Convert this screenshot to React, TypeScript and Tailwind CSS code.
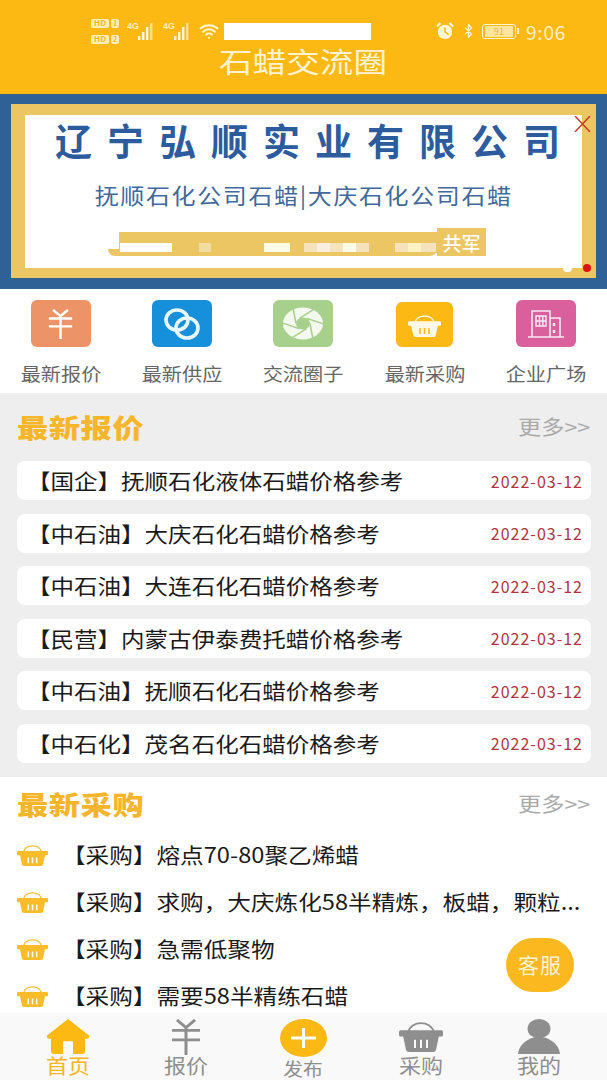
import React from 'react';
import { Bluetooth, Wifi } from 'lucide-react';

const quotes = [
  { title: '【国企】抚顺石化液体石蜡价格参考', date: '2022-03-12' },
  { title: '【中石油】大庆石化石蜡价格参考', date: '2022-03-12' },
  { title: '【中石油】大连石化石蜡价格参考', date: '2022-03-12' },
  { title: '【民营】内蒙古伊泰费托蜡价格参考', date: '2022-03-12' },
  { title: '【中石油】抚顺石化石蜡价格参考', date: '2022-03-12' },
  { title: '【中石化】茂名石化石蜡价格参考', date: '2022-03-12' },
];

const purchases = [
  '【采购】熔点70-80聚乙烯蜡',
  '【采购】求购，大庆炼化58半精炼，板蜡，颗粒...',
  '【采购】急需低聚物',
  '【采购】需要58半精练石蜡',
];

const Basket = ({ color, stripe, className }: { color: string; stripe: string; className: string }) => (
  <svg viewBox="0 0 44 32" preserveAspectRatio="none" className={className}>
    <path d="M9 13 C12 1 32 1 35 13" fill="none" stroke={color} strokeWidth="1.8" />
    <rect x="0" y="11" width="44" height="6" rx="1.5" fill={color} />
    <path d="M4 16 H40 L37 30 Q36.5 32 34 32 H10 Q7.5 32 7 30 Z" fill={color} />
    <path d="M16 20 V28 M22 20 V28 M28 20 V28" stroke={stripe} strokeWidth="2" />
  </svg>
);

const Yen = ({ color, className }: { color: string; className: string }) => (
  <svg viewBox="0 0 30 38" preserveAspectRatio="none" className={className}>
    <path d="M6 1 L15 9 L24 1 M1 12 H29 M1 22 H29 M15 9 V38" fill="none" stroke={color} strokeWidth="3" />
  </svg>
);

const Signal = () => (
  <svg viewBox="0 0 32 22" className="h-[22px] w-[32px]">
    <text x="0" y="9" fontSize="9" fontWeight="700" fill="#fdeeb8" fontFamily="Liberation Sans, sans-serif">4G</text>
    <rect x="11" y="16" width="2.4" height="4" fill="#fff6d8" />
    <rect x="15" y="12" width="2.4" height="8" fill="#fff6d8" />
    <rect x="19" y="7" width="2.4" height="13" fill="#fff6d8" />
    <rect x="23" y="3" width="2.4" height="17" fill="#fddf8a" />
  </svg>
);

const HdTag = ({ n }: { n: string }) => (
  <div className="flex items-center gap-[2px]">
    <span className="flex h-[9px] w-[18px] items-center justify-center rounded-[2px] bg-[#fdeeb8] text-[8px] font-bold leading-none text-[#fdb913]">HD</span>
    <span className="flex h-[9px] w-[8px] items-center justify-center rounded-[2px] bg-[#fdeeb8] text-[7px] font-bold leading-none text-[#fdb913]">{n}</span>
  </div>
);

const StatusBar = () => (
  <div className="flex h-[26px] items-center pl-[91px]">
    <div className="flex w-[36px] flex-col gap-[7px]">
      <HdTag n="1" />
      <HdTag n="2" />
    </div>
    <Signal />
    <div className="ml-[4px]">
      <Signal />
    </div>
    <Wifi className="ml-[3px] h-[20px] w-[22px] text-[#fff6d8]" strokeWidth={2.4} />
    <div className="ml-[4px] h-[17px] w-[147px] bg-white" />
    <svg viewBox="0 0 20 20" className="ml-[64px] h-[18px] w-[20px]">
      <circle cx="10" cy="11" r="8" fill="#fff6d8" />
      <path d="M10 6 V11 L14 14" fill="none" stroke="#fdb913" strokeWidth="1.8" />
      <path d="M1 5 L5 1 M19 5 L15 1" stroke="#fff6d8" strokeWidth="2.4" />
    </svg>
    <Bluetooth className="ml-[6px] h-[20px] w-[15px] text-[#fff6d8]" strokeWidth={2.2} />
    <div className="ml-[6px] flex items-center gap-[1px]">
      <div className="flex h-[15px] w-[34px] items-center justify-center rounded-[3px] border border-[#fff6d8]">
        <div className="flex h-[11px] w-[28px] items-center justify-center rounded-[1px] bg-[#fde59b] text-[9px] leading-none text-[#fdb913]">91</div>
      </div>
      <div className="h-[6px] w-[2px] bg-[#fff6d8]" />
    </div>
    <span className="ml-[7px] text-[19px] leading-none tracking-[0.8px] text-[#fdf0c4]">9:06</span>
  </div>
);

const Banner = () => (
  <div className="h-[195px] bg-[#2f6096] px-[11px] py-[10px]">
    <div className="h-[174px] bg-[#ecc663] pb-[10px] pl-[14px] pr-[14px] pt-[11px]">
      <div className="relative flex h-[153px] flex-col items-center bg-white">
        <div className="ml-[8px] mt-[3px] text-[37px] font-bold leading-[44px] tracking-[15px] text-[#2c5c9e] [margin-right:-15px]">辽宁弘顺实业有限公司</div>
        <div className="mt-[18px] scale-x-[1.09] text-[22px] leading-[28px] tracking-[1.5px] text-[#41699b]">抚顺石化公司石蜡|大庆石化公司石蜡</div>
        <div className="relative ml-[-13px] mt-[20px] h-[28px] w-[378px]">
          <div className="absolute left-[11px] right-[49px] top-[4px] h-[21px] bg-[#ecc663]" />
          <div className="absolute left-0 right-[49px] top-[21px] h-[7px] rounded-b-[8px] bg-[#ecc663]" />
          <div className="absolute right-0 top-0 flex h-[28px] w-[49px] items-center justify-center bg-[#ecc663] text-[19px] font-medium leading-none text-white">共军</div>
          <div className="absolute left-[12px] top-[15px] h-[9px] w-[52px] bg-white" />
          <div className="absolute left-[91px] top-[15px] h-[9px] w-[12px] bg-[#f3dca0]" />
          <div className="absolute left-[156px] top-[15px] h-[9px] w-[26px] bg-[#fffde8]" />
          <div className="absolute left-[196px] top-[15px] h-[9px] w-[65px] bg-[#f5e3bd]" />
          <div className="absolute left-[209px] top-[15px] h-[9px] w-[13px] bg-[#fbeee0]" />
          <div className="absolute left-[235px] top-[15px] h-[9px] w-[13px] bg-[#fffde8]" />
          <div className="absolute left-[287px] top-[15px] h-[9px] w-[41px] bg-[#f5e3bd]" />
          <div className="absolute left-[300px] top-[15px] h-[9px] w-[13px] bg-[#fff3c4]" />
        </div>
        <svg viewBox="0 0 17 16" className="absolute right-[-9px] top-[1px] h-[16px] w-[17px]">
          <path d="M1 0 L16 16 M16 0 L1 16" stroke="#c8352b" strokeWidth="1.4" />
        </svg>
      </div>
    </div>
    <div className="relative">
      <div className="absolute bottom-[6px] right-[5px] h-[8px] w-[8px] rounded-full bg-[#e0100c]" />
      <div className="absolute bottom-[6px] right-[24px] h-[8px] w-[9px] rounded-full bg-white" />
    </div>
  </div>
);

// 光圈图标的六条缝
const apertureSlits = [0, 60, 120, 180, 240, 300].map((deg) => {
  const a = (deg * Math.PI) / 180;
  const b = ((deg + 62) * Math.PI) / 180;
  return {
    x1: 30 + 7 * Math.cos(a),
    y1: 23.5 + 6 * Math.sin(a),
    x2: 30 + 21 * Math.cos(b),
    y2: 23.5 + 17 * Math.sin(b),
  };
});

const navItems = [
  {
    label: '最新报价',
    bg: 'bg-[#ec9468]',
    icon: <Yen color="#ffffff" className="h-[30px] w-[25px]" />,
    size: 'h-[47px] w-[60px]',
  },
  {
    label: '最新供应',
    bg: 'bg-[#1790db]',
    icon: (
      <svg viewBox="0 0 60 47" className="h-[47px] w-[60px]">
        <ellipse cx="25" cy="20" rx="11" ry="10" fill="none" stroke="#e8f6fd" strokeWidth="3.6" />
        <ellipse cx="35" cy="28" rx="11" ry="10" fill="none" stroke="#e8f6fd" strokeWidth="3.6" />
      </svg>
    ),
    size: 'h-[47px] w-[60px]',
  },
  {
    label: '交流圈子',
    bg: 'bg-[#a8d08d]',
    icon: (
      <svg viewBox="0 0 60 47" className="h-[47px] w-[60px]">
        <ellipse cx="30" cy="23.5" rx="20" ry="16" fill="#f3f9ee" />
        <ellipse cx="30" cy="23.5" rx="7" ry="6" fill="#a8d08d" />
        {apertureSlits.map((s) => (
          <line key={s.x1} x1={s.x1} y1={s.y1} x2={s.x2} y2={s.y2} stroke="#a8d08d" strokeWidth="1.5" />
        ))}
      </svg>
    ),
    size: 'h-[47px] w-[60px]',
  },
  {
    label: '最新采购',
    bg: 'bg-[#fdb913]',
    icon: <Basket color="#fff8e6" stripe="#fdb913" className="h-[24px] w-[33px]" />,
    size: 'h-[45px] w-[57px]',
  },
  {
    label: '企业广场',
    bg: 'bg-[#d95f9d]',
    icon: (
      <svg viewBox="0 0 36 28" className="h-[28px] w-[36px]" fill="none" stroke="#fbeaf3" strokeWidth="1.6">
        <path d="M0 27 H36 M4 27 V1 H22 V27 M22 8 H32 V27" />
        <path d="M8 6 H18 V16 H8 Z M8 11 H18 M11.5 6 V16 M14.8 6 V16" strokeWidth="1.4" />
        <path d="M26 13 V16 M26 20 V23" strokeWidth="2.4" />
      </svg>
    ),
    size: 'h-[47px] w-[60px]',
  },
];

const NavGrid = () => (
  <div className="grid h-[104px] grid-cols-5 bg-white">
    {navItems.map((item) => (
      <div key={item.label} className="flex flex-col items-center">
        <div className="flex h-[58px] items-end">
          <div className={`flex items-center justify-center rounded-[6px] ${item.bg} ${item.size}`}>{item.icon}</div>
        </div>
        <span className="mt-[14px] inline-block scale-x-[1.12] text-[18px] leading-[24px] text-[#666666]">{item.label}</span>
      </div>
    ))}
  </div>
);

const SectionTitle = ({ title, className }: { title: string; className: string }) => (
  <div className={`flex items-center justify-between pl-[17px] pr-[17px] ${className}`}>
    <span className="origin-left scale-x-[1.2] text-[26px] font-black leading-none tracking-[0.5px] text-[#f7b52a]">{title}</span>
    <span className="origin-right scale-x-[1.16] text-[20px] leading-none text-[#a9a9a9]">更多&gt;&gt;</span>
  </div>
);

const tabs = [
  { label: '首页', active: true },
  { label: '报价' },
  { label: '发布' },
  { label: '采购' },
  { label: '我的' },
];

const TabIcon = ({ index }: { index: number }) => {
  if (index === 0) {
    return (
      <svg viewBox="0 0 44 36" preserveAspectRatio="none" className="h-[35px] w-[44px]">
        <path d="M22 0 L43 17 C44 20 41 21 39 20 V33 C39 35 38 36 36 36 H27 V23 H17 V36 H8 C6 36 5 35 5 33 V20 C3 21 0 20 1 17 Z" fill="#fdb913" />
      </svg>
    );
  }
  if (index === 1) return <Yen color="#8e8e8e" className="h-[36px] w-[30px]" />;
  if (index === 2) {
    return (
      <svg viewBox="0 0 47 38" className="h-[38px] w-[47px]">
        <ellipse cx="23.5" cy="19" rx="23.5" ry="19" fill="#fdb913" />
        <path d="M11 19 H36 M23.5 9 V29" stroke="#ffffff" strokeWidth="3" />
      </svg>
    );
  }
  if (index === 3) return <Basket color="#8e8e8e" stripe="#f9f9f9" className="h-[33px] w-[44px]" />;
  return (
    <svg viewBox="0 0 44 36" preserveAspectRatio="none" className="h-[35px] w-[42px]">
      <ellipse cx="22" cy="10" rx="12" ry="10" fill="#8e8e8e" />
      <path d="M0 36 C1 26 10 21 16 19 H28 C34 21 43 26 44 36 Z" fill="#8e8e8e" />
    </svg>
  );
};

const TabBar = () => (
  <div className="grid h-[67px] shrink-0 grid-cols-5 bg-[#f9f9f9] px-[9px]">
    {tabs.map((tab, index) => (
      <div key={tab.label} className="flex flex-col items-center pt-[6px]">
        <div className="flex h-[36px] items-start justify-center">
          <TabIcon index={index} />
        </div>
        <span
          className={`inline-block scale-x-[1.1] leading-[22px] ${tab.active ? 'text-[#f7b52a]' : 'text-[#8e8e8e]'} ${index === 2 ? 'mt-[2px] text-[18px]' : 'text-[20px]'}`}
        >
          {tab.label}
        </span>
      </div>
    ))}
  </div>
);

const App: React.FC = () => {
  return (
    <div className="relative flex h-[1080px] w-[607px] flex-col overflow-hidden bg-white font-['Noto_Sans_CJK_SC','Noto_Sans',sans-serif]">
      <div className="h-[94px] shrink-0 bg-[#fdb913] pt-[18px]">
        <StatusBar />
        <div className="-mt-[1px] text-center">
          <span className="inline-block scale-x-[1.2] text-[28px] leading-[36px] text-[#fdf3d3]">石蜡交流圈</span>
        </div>
      </div>
      <Banner />
      <NavGrid />

      <div className="bg-[#eeeeee] pb-[14px]">
        <SectionTitle title="最新报价" className="h-[68px]" />
        <div className="flex flex-col gap-[13.6px] pl-[17px] pr-[16px]">
          {quotes.map((item) => (
            <div key={item.title} className="flex h-[39px] items-center justify-between rounded-[8px] bg-white pl-[10px] pr-[8px]">
              <span className="origin-left scale-x-[1.12] text-[21px] leading-none text-[#1a1a1a]">{item.title}</span>
              <span className="text-[16px] leading-none tracking-[1px] text-[#b0343f]">{item.date}</span>
            </div>
          ))}
        </div>
      </div>

      <div className="min-h-0 flex-1 overflow-hidden">
        <SectionTitle title="最新采购" className="h-[54px]" />
        {purchases.map((text) => (
          <div key={text} className="flex h-[47px] items-center pl-[17px]">
            <Basket color="#fbbc2c" stripe="#ffffff" className="h-[23px] w-[31px] shrink-0" />
            <span className="ml-[14px] origin-left scale-x-[1.125] whitespace-nowrap text-[21px] leading-none text-[#1a1a1a]">{text}</span>
          </div>
        ))}
      </div>

      <TabBar />

      <div className="absolute left-[506px] top-[938px] flex h-[54px] w-[68px] items-center justify-center rounded-full bg-[#fbb81f] text-[21px] tracking-[1px] text-[#fdf3d3]">
        客服
      </div>
    </div>
  );
};

export default App;
